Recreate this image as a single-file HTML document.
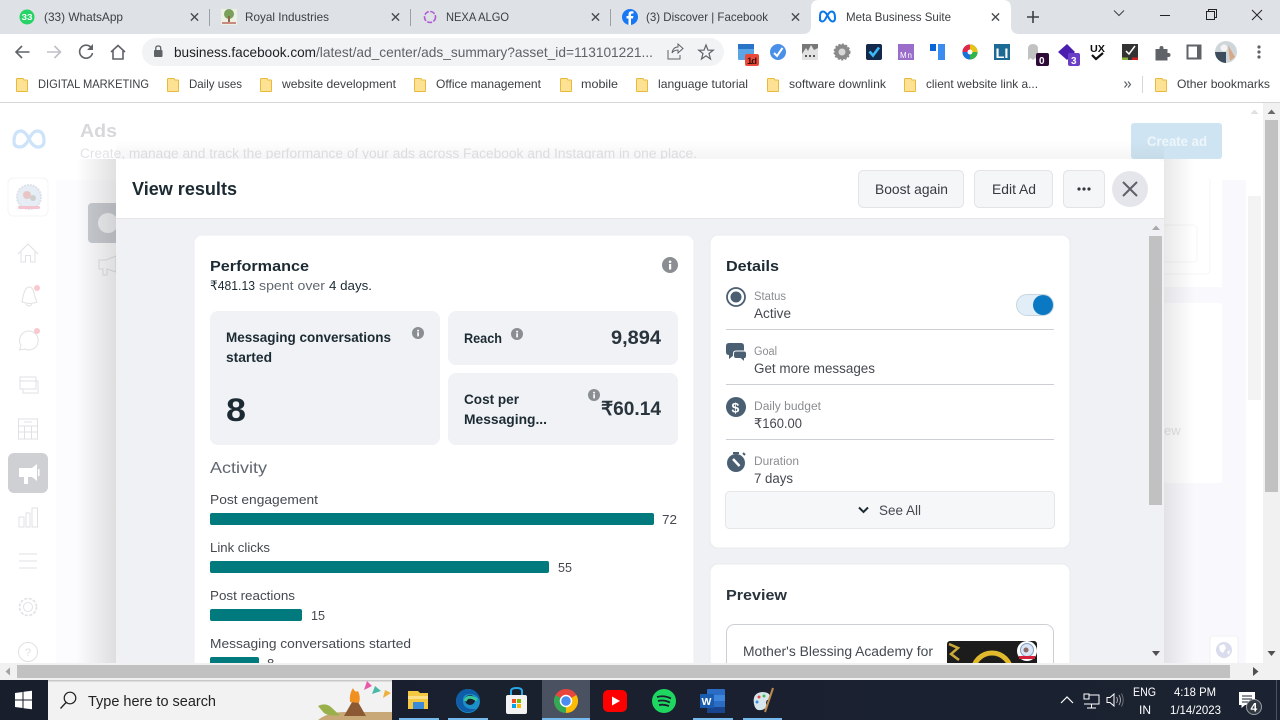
<!DOCTYPE html>
<html><head><meta charset="utf-8"><title>Meta Business Suite</title>
<style>
html,body{margin:0;padding:0;background:#fff;overflow:hidden}
svg{display:block;font-family:"Liberation Sans",Arial,sans-serif}
.b{font-weight:700}
</style></head><body>
<svg width="1280" height="720" viewBox="0 0 1280 720" xmlns="http://www.w3.org/2000/svg">
<defs>
<linearGradient id="sl" x1="0" x2="1" y1="0" y2="0"><stop offset="0" stop-color="#000" stop-opacity="0"/><stop offset="1" stop-color="#000" stop-opacity=".12"/></linearGradient>
<linearGradient id="sr" x1="0" x2="1" y1="0" y2="0"><stop offset="0" stop-color="#000" stop-opacity=".09"/><stop offset="1" stop-color="#000" stop-opacity="0"/></linearGradient>
<linearGradient id="st" x1="0" x2="0" y1="0" y2="1"><stop offset="0" stop-color="#000" stop-opacity="0"/><stop offset="1" stop-color="#000" stop-opacity=".04"/></linearGradient>
<linearGradient id="tb" x1="0" x2="1" y1="0" y2="0"><stop offset="0" stop-color="#181e2c"/><stop offset="1" stop-color="#1b2231"/></linearGradient>
<symbol id="fold" viewBox="0 0 12 14"><path d="M.5 1.2Q.5.5 1.2.5H7L8 2H11Q11.500 2 11.500 2.600V13Q11.500 13.500 11 13.500H1Q.5 13.500 .5 13Z" fill="#fde293" stroke="#e8b93f"/></symbol>
<symbol id="inf" viewBox="0 0 16 16"><circle cx="8" cy="8" r="8" fill="#8a8d91"/><rect x="7" y="7" width="2.200" height="5.500" fill="#fff"/><circle cx="8.100" cy="4.800" r="1.300" fill="#fff"/></symbol>
<symbol id="x" viewBox="0 0 10 10"><path d="M1 1L9 9M9 1L1 9" stroke="#45494d" stroke-width="1.500" fill="none"/></symbol>
</defs>

<!-- tab strip -->
<rect width="1280" height="34" fill="#dee1e6"/>
<path d="M803 34Q811 34 811 26V8Q811 0 819 0H1003Q1011 0 1011 8V26Q1011 34 1019 34Z" fill="#fff"/>
<g fill="#9aa0a6"><rect x="209" y="9" width="1" height="17"/><rect x="410" y="9" width="1" height="17"/><rect x="610" y="9" width="1" height="17"/></g>
<circle cx="27" cy="17" r="7.500" fill="#25d366"/><text x="21.500" y="20" font-size="8" fill="#fff" class="b" textLength="11" lengthAdjust="spacingAndGlyphs">33</text>
<rect x="221" y="9" width="16" height="16" fill="#eef0e4"/><circle cx="229" cy="14" r="5" fill="#7ba05b"/><rect x="228" y="16" width="2" height="6" fill="#8a6a4a"/><rect x="222" y="22" width="14" height="2" fill="#c98a80"/>
<circle cx="430" cy="17" r="5.500" fill="none" stroke="#b05ad0" stroke-width="1.600" stroke-dasharray="5 1.500"/>
<circle cx="630" cy="17" r="8" fill="#1877f2"/><path d="M631 25V18.500H633L633.400 16H631V14.700Q631 13.500 632.200 13.500H633.500V11.400Q632.600 11.200 631.600 11.200Q628.500 11.200 628.500 14.300V16H626.500V18.500H628.500V25Z" fill="#fff"/>
<path d="M820 21V16Q820 11.500 823 11.500Q825.500 11.500 828 16.500Q830.500 21.500 832.500 21.500Q835 21.500 835 18Q835 11.500 831.500 11.500Q829.500 11.500 827 16Q824.500 21.500 822.500 21.500Q820 21.500 820 18" fill="none" stroke="#0a78e8" stroke-width="2"/>
<g font-size="12" fill="#3c4043">
<text x="44" y="21" textLength="79" lengthAdjust="spacingAndGlyphs">(33) WhatsApp</text>
<text x="245" y="21" textLength="84" lengthAdjust="spacingAndGlyphs">Royal Industries</text>
<text x="446" y="21" textLength="63" lengthAdjust="spacingAndGlyphs">NEXA ALGO</text>
<text x="646" y="21" textLength="122" lengthAdjust="spacingAndGlyphs">(3) Discover | Facebook</text>
<text x="846" y="21" textLength="105" lengthAdjust="spacingAndGlyphs">Meta Business Suite</text>
</g>
<use href="#x" x="190" y="12.500" width="9" height="9"/><use href="#x" x="391" y="12.500" width="9" height="9"/><use href="#x" x="591" y="12.500" width="9" height="9"/><use href="#x" x="791" y="12.500" width="9" height="9"/><use href="#x" x="991" y="12.500" width="9" height="9"/>
<path d="M1033 11V23M1027 17H1039" stroke="#3c4043" stroke-width="1.600" fill="none"/>
<path d="M1114 10.500L1119 15.500L1124 10.500" stroke="#3c4043" fill="none"/>
<path d="M1160 15.500H1170" stroke="#222" fill="none"/>
<path d="M1206.500 11.500H1214.500V19.500H1206.500ZM1208.500 11.500V9.500H1216.500V17.500H1214.500" stroke="#222" fill="none"/>
<path d="M1252 10L1262 20M1262 10L1252 20" stroke="#222" fill="none"/>

<!-- toolbar -->
<rect y="34" width="1280" height="68" fill="#fff"/>
<path d="M29.500 52H16M22 46L16 52L22 58" stroke="#5f6368" stroke-width="1.600" fill="none"/>
<path d="M47 52H60.500M54.500 46L60.500 52L54.500 58" stroke="#bdc1c6" stroke-width="1.600" fill="none"/>
<path d="M91.500 48A6.500 6.500 0 1 0 92.500 53" stroke="#5f6368" stroke-width="1.600" fill="none"/><path d="M93 44V50H87Z" fill="#5f6368"/>
<path d="M111 52L118 45.500L125 52M113 50.500V59H123V50.500" stroke="#5f6368" stroke-width="1.600" fill="none"/>
<rect x="142" y="38" width="582" height="28" rx="14" fill="#f1f3f4"/>
<rect x="154" y="50" width="8.500" height="7" rx="1" fill="#5f6368"/><path d="M155.800 50V48Q155.800 46 158.250 46Q160.700 46 160.700 48V50" stroke="#5f6368" stroke-width="1.300" fill="none"/>
<text x="174" y="57" font-size="14" fill="#202124" textLength="142" lengthAdjust="spacingAndGlyphs">business.facebook.com</text>
<text x="316" y="57" font-size="14" fill="#5f6368" textLength="337" lengthAdjust="spacingAndGlyphs">/latest/ad_center/ads_summary?asset_id=113101221...</text>
<path d="M668 50V59H680V55M672 53Q673 47 678 47V44L683 48.500L678 53V50Q674 50 672 53Z" stroke="#5f6368" stroke-width="1" fill="none"/>
<path d="M706 45L708 50.200H713.200L709 53.500L710.500 59L706 55.800L701.500 59L703 53.500L698.800 50.200H704Z" stroke="#5f6368" stroke-width="1.200" fill="none"/>

<!-- extensions -->
<rect x="738" y="44" width="16" height="16" rx="1" fill="#5ba4e6"/><rect x="738" y="44" width="16" height="5" fill="#2a74c8"/>
<rect x="745" y="54" width="14" height="12" rx="2" fill="#ea4a3a"/><text x="747" y="64" font-size="9.500" class="b" fill="#3a0f0a" textLength="10">1d</text>
<circle cx="778" cy="52" r="8" fill="#4a90e8"/><path d="M774 53L777 56L782.500 48" stroke="#fff" stroke-width="2" fill="none"/>
<rect x="802" y="44" width="16" height="16" fill="#777"/><path d="M802 54L806 48L808 51L811 45L814 50L818 48V60H802Z" fill="#e2e2e2"/><g fill="#555"><rect x="805" y="55" width="2" height="2"/><rect x="809" y="55" width="2" height="2"/><rect x="813" y="55" width="2" height="2"/></g>
<circle cx="842" cy="52" r="7.500" fill="#8a8a8a" stroke="#8a8a8a" stroke-dasharray="2 1.500" stroke-width="2"/><circle cx="842" cy="52" r="3.500" fill="#d8d8d8"/>
<rect x="866" y="44" width="16" height="16" rx="2" fill="#13294b"/><path d="M869.500 51.500L873 55.500L879 47.500" stroke="#3db8f5" stroke-width="2.600" fill="none"/>
<rect x="898" y="44" width="16" height="16" fill="#9b6dca"/><text x="900" y="58" font-size="8" fill="#fff" textLength="12">Mn</text>
<rect x="930" y="44" width="6" height="7" fill="#0a66d8"/><rect x="938" y="44" width="7" height="16" fill="#3a8cf0"/>
<circle cx="970" cy="52" r="7.500" fill="#222"/><path d="M970 52V44.500A7.500 7.500 0 0 1 977.500 52Z" fill="#e6c415"/><path d="M970 52H977.500A7.500 7.500 0 0 1 970 59.500Z" fill="#2fb54a"/><path d="M970 52V59.500A7.500 7.500 0 0 1 962.500 52Z" fill="#1a73d8"/><path d="M970 52H962.500A7.500 7.500 0 0 1 970 44.500Z" fill="#e0284a"/><circle cx="970" cy="52" r="2.500" fill="#fff"/>
<rect x="994" y="44" width="16" height="16" fill="#1d6a94"/><text x="995.500" y="58" font-size="14" fill="#fff" class="b" textLength="13" lengthAdjust="spacingAndGlyphs">LI</text>
<path d="M1028 60V49Q1028 44 1033 44Q1038 44 1038 49V60L1035.500 58L1033 60L1030.500 58Z" fill="#c2c2c2"/>
<rect x="1036" y="53" width="13" height="13" rx="2" fill="#2d0a38"/><text x="1039" y="64" font-size="10" class="b" fill="#fff">0</text>
<path d="M1058 52L1067 44L1075 52L1067 60Z" fill="#4a1fb0"/>
<rect x="1068" y="53" width="12" height="13" rx="2" fill="#6a3fc8"/><text x="1071" y="64" font-size="10" class="b" fill="#fff">3</text>
<text x="1090" y="52" font-size="10.500" class="b" fill="#111" textLength="15" lengthAdjust="spacingAndGlyphs">UX</text><path d="M1092 55L1096 59L1103 53" stroke="#111" stroke-width="2.200" fill="none"/>
<rect x="1122" y="44" width="16" height="16" fill="#333"/><rect x="1122" y="57.500" width="6" height="2.500" fill="#8ab53a"/><rect x="1132" y="57.500" width="6" height="2.500" fill="#c22"/><path d="M1126 51L1129 54L1135 46" stroke="#fff" stroke-width="1.500" fill="none"/>
<path d="M1155.500 49H1159.500V48A2 2 0 0 1 1163.500 48V49H1167.500V53H1168.500A2 2 0 0 1 1168.500 57H1167.500V60.500H1155.500Z" fill="#5f6368"/>
<rect x="1187.500" y="45.500" width="13" height="13" fill="none" stroke="#5f6368" stroke-width="2"/><rect x="1197" y="45" width="4" height="14" fill="#5f6368"/>
<circle cx="1226" cy="52" r="11" fill="#cfd6da"/><path d="M1215 52H1226V63A11 11 0 0 1 1215 52Z" fill="#3d4c5c"/><circle cx="1224" cy="48" r="3.500" fill="#f4f4f4"/><path d="M1228 45L1235 57L1230 61Z" fill="#d8a887"/>
<g fill="#5f6368"><circle cx="1259" cy="47" r="1.600"/><circle cx="1259" cy="52" r="1.600"/><circle cx="1259" cy="57" r="1.600"/></g>

<!-- bookmarks -->
<g>
<use href="#fold" x="16" y="78" width="12" height="14"/><use href="#fold" x="167" y="78" width="12" height="14"/><use href="#fold" x="260" y="78" width="12" height="14"/><use href="#fold" x="414" y="78" width="12" height="14"/><use href="#fold" x="560" y="78" width="12" height="14"/><use href="#fold" x="636" y="78" width="12" height="14"/><use href="#fold" x="767" y="78" width="12" height="14"/><use href="#fold" x="904" y="78" width="12" height="14"/><use href="#fold" x="1155" y="78" width="12" height="14"/>
</g>
<g font-size="12" fill="#3c4043">
<text x="38" y="88" textLength="111" lengthAdjust="spacingAndGlyphs">DIGITAL MARKETING</text>
<text x="189" y="88" textLength="53" lengthAdjust="spacingAndGlyphs">Daily uses</text>
<text x="282" y="88" textLength="114" lengthAdjust="spacingAndGlyphs">website development</text>
<text x="436" y="88" textLength="105" lengthAdjust="spacingAndGlyphs">Office management</text>
<text x="581" y="88" textLength="37" lengthAdjust="spacingAndGlyphs">mobile</text>
<text x="658" y="88" textLength="90" lengthAdjust="spacingAndGlyphs">language tutorial</text>
<text x="789" y="88" textLength="97" lengthAdjust="spacingAndGlyphs">software downlink</text>
<text x="926" y="88" textLength="112" lengthAdjust="spacingAndGlyphs">client website link a...</text>
<text x="1177" y="88" textLength="93" lengthAdjust="spacingAndGlyphs">Other bookmarks</text>
</g>
<path d="M1124.500 81.500L1127 84.500L1124.500 87.500M1128 81.500L1130.500 84.500L1128 87.500" stroke="#5f6368" stroke-width="1.200" fill="none"/>
<rect x="1142" y="76" width="1" height="17" fill="#d5d7db"/>
<rect y="102" width="1280" height="1" fill="#d6d6d6"/>

<!-- faded page -->
<rect y="103" width="1263" height="561" fill="#fff"/>
<rect x="56" y="180" width="1190" height="484" fill="#fcfcfe"/>
<rect x="1164" y="180" width="82" height="484" fill="#f9f9fd"/>
<path d="M14 142Q14 131 21 131Q25 131 29 139Q33 147 38 147Q44 147 44 141Q44 131 37 131Q33 131 29 139Q25 147 20 147Q14 147 14 142Z" fill="none" stroke="#cde3f9" stroke-width="3.200"/>
<text x="80" y="137" font-size="18" class="b" fill="#d6d8dc" textLength="37" lengthAdjust="spacingAndGlyphs">Ads</text>
<text x="80" y="158" font-size="13.500" fill="#e2e3e6" textLength="617" lengthAdjust="spacingAndGlyphs">Create, manage and track the performance of your ads across Facebook and Instagram in one place.</text>
<!-- sidebar -->
<rect x="8" y="178" width="40" height="38" rx="5" fill="#fff" stroke="#f4f4f6"/>
<circle cx="29" cy="197" r="12" fill="#e6edf4" stroke="#dde2ea" stroke-dasharray="2 1" stroke-width="2"/><circle cx="27" cy="195" r="4" fill="#e8c6c6"/><circle cx="33" cy="198" r="3" fill="#cfcfcf"/><rect x="18" y="206" width="22" height="3" rx="1.500" fill="#f3c5cf"/>
<g fill="none" stroke="#e0e1e4" stroke-width="1">
<path d="M18 254L28 244L38 254M21 252V262H25.500V255.500H30.500V262H35V252"/>
<path d="M22 302Q23 296 24 293Q26 287 29 287Q33 287 34 293Q35 298 37 302Q30 305 22 302ZM26 304Q29 308 32 304"/>
<path d="M28 331A9.500 9.500 0 1 1 24.500 349L19.500 350L21 345.500A9.500 9.500 0 0 1 28 331Z"/>
<path d="M20 377H36V389H20ZM20 381H36M36 381H38V393H23V389"/>
<path d="M18.500 419H37.500V439H18.500ZM18.500 426H37.500M18.500 432H37.500M24.500 426V439M31.500 426V439M24 422H32"/>
<path d="M19 517H24V527H19ZM26 513H30V527H26ZM32 508H37.500V527H32Z"/>
<path d="M19 554H37M19 561H37M19 568H37"/>
<circle cx="28" cy="607" r="4.500"/><circle cx="28" cy="607" r="8.500" stroke-dasharray="3 1.500" stroke-width="1.600"/>
<circle cx="28" cy="652" r="9.500"/>
</g>
<text x="25" y="656" font-size="11" fill="#e0e1e4">?</text>
<circle cx="37" cy="288" r="3" fill="#f9c9cd"/><circle cx="37" cy="331" r="3" fill="#f9c9cd"/>
<rect x="8" y="453" width="40" height="40" rx="6" fill="#ced0d4"/>
<path d="M19 468H32L37 464V481L32 477H19ZM24 477H28V484H24Z" fill="#fff"/><rect x="38" y="469" width="1.500" height="7" fill="#fff"/>
<rect x="88" y="203" width="40" height="40" rx="4" fill="#c9ccd1"/><circle cx="108" cy="223" r="10" fill="#eff0f2"/>
<path d="M99 260H106L116 256V272L107 269V275H103V269H99Z" fill="none" stroke="#e0e1e4"/>
<!-- faded right -->
<rect x="1164" y="170" width="58" height="117" fill="#fff"/>
<rect x="1140" y="160" width="70" height="114" rx="4" fill="none" stroke="#f5f5f7"/>
<rect x="1140" y="225" width="57" height="37" rx="4" fill="none" stroke="#f5f5f7"/>
<rect x="1164" y="103" width="82" height="76" fill="#fff"/>
<rect x="1131" y="123" width="91" height="36" rx="3" fill="#cfe4f2"/>
<text x="1147" y="146" font-size="14" fill="#eef6fb" class="b" textLength="60" lengthAdjust="spacingAndGlyphs">Create ad</text>
<rect x="1164" y="303" width="58" height="180" rx="3" fill="#fff"/>
<text x="1164" y="435" font-size="13" fill="#e3e3e6">ew</text>
<rect x="1210" y="636" width="28" height="30" rx="3" fill="#fff" stroke="#f1f1f4"/>
<circle cx="1224" cy="650" r="8" fill="#d8dcec"/><path d="M1219 646L1224 644L1226 648L1223 653L1220 651ZM1227 652L1230 650L1229 655Z" fill="#fff"/>
<!-- page scrollbars -->
<rect x="1246" y="103" width="17" height="561" fill="#fff"/>
<rect x="1248" y="196" width="13" height="204" fill="#f3f3f3"/>
<path d="M1250.500 114L1254.500 109.500L1258.500 114Z" fill="#e0e0e0"/>
<rect x="1263" y="103" width="17" height="577" fill="#f1f1f1"/>
<rect x="1265" y="120" width="13" height="372" fill="#c1c1c1"/>
<path d="M1267.500 114L1271.500 109.500L1275.500 114Z" fill="#6a6a6a"/>
<path d="M1267.500 651L1271.500 656L1275.500 651Z" fill="#505050"/>

<!-- modal shadow -->
<rect x="76" y="159" width="40" height="505" fill="url(#sl)"/>
<rect x="1164" y="159" width="30" height="505" fill="url(#sr)"/>
<rect x="116" y="140" width="1048" height="19" fill="url(#st)"/>

<!-- modal -->
<path d="M116 664V167Q116 159 124 159H1156Q1164 159 1164 167V664Z" fill="#eff1f5"/>
<path d="M116 218V167Q116 159 124 159H1156Q1164 159 1164 167V218Z" fill="#fff"/>
<rect x="116" y="218" width="1048" height="1" fill="#e3e5e9"/>
<text x="132" y="195" font-size="18" class="b" fill="#1c2b33" textLength="105" lengthAdjust="spacingAndGlyphs">View results</text>
<rect x="858.500" y="170.500" width="105" height="37" rx="5" fill="#f5f6f8" stroke="#e2e4e8"/>
<text x="875" y="194" font-size="14" fill="#353a40" textLength="73" lengthAdjust="spacingAndGlyphs">Boost again</text>
<rect x="974.500" y="170.500" width="78" height="37" rx="5" fill="#f5f6f8" stroke="#e2e4e8"/>
<text x="992" y="194" font-size="14" fill="#353a40" textLength="44" lengthAdjust="spacingAndGlyphs">Edit Ad</text>
<rect x="1063.500" y="170.500" width="41" height="37" rx="5" fill="#f5f6f8" stroke="#e2e4e8"/>
<g fill="#353a40"><circle cx="1079" cy="189" r="1.600"/><circle cx="1084" cy="189" r="1.600"/><circle cx="1089" cy="189" r="1.600"/></g>
<circle cx="1130" cy="189" r="18" fill="#e4e6eb"/><path d="M1123 182L1137 196M1137 182L1123 196" stroke="#5d6168" stroke-width="2" fill="none"/>
<!-- modal scrollbar -->
<path d="M1152 230L1156 225.500L1160 230Z" fill="#a8a8a8"/>
<rect x="1149" y="236" width="13" height="269" fill="#c1c1c1"/>
<path d="M1152 651L1156 656L1160 651Z" fill="#505050"/>

<!-- performance card -->
<rect x="194" y="235" width="500" height="460" rx="8" fill="#fff" stroke="#eceef1"/>
<text x="210" y="271" font-size="15" class="b" fill="#1c2b33" textLength="99" lengthAdjust="spacingAndGlyphs">Performance</text>
<text x="210" y="290" font-size="13" fill="#1c2b33" textLength="45" lengthAdjust="spacingAndGlyphs">₹481.13</text>
<text x="259" y="290" font-size="13" fill="#606770" textLength="66" lengthAdjust="spacingAndGlyphs">spent over</text>
<text x="329" y="290" font-size="13" fill="#1c2b33" textLength="43" lengthAdjust="spacingAndGlyphs">4 days.</text>
<use href="#inf" x="662" y="257" width="16" height="16"/>
<rect x="210" y="311" width="230" height="134" rx="8" fill="#f0f2f5"/>
<rect x="448" y="311" width="230" height="54" rx="8" fill="#f0f2f5"/>
<rect x="448" y="373" width="230" height="72" rx="8" fill="#f0f2f5"/>
<g font-size="14" class="b" fill="#1c2b33">
<text x="226" y="342" textLength="165" lengthAdjust="spacingAndGlyphs">Messaging conversations</text>
<text x="226" y="362" textLength="46" lengthAdjust="spacingAndGlyphs">started</text>
<text x="464" y="343" textLength="38" lengthAdjust="spacingAndGlyphs">Reach</text>
<text x="464" y="404" textLength="55" lengthAdjust="spacingAndGlyphs">Cost per</text>
<text x="464" y="424" textLength="83" lengthAdjust="spacingAndGlyphs">Messaging...</text>
</g>
<use href="#inf" x="412" y="327" width="12" height="12"/>
<use href="#inf" x="511" y="328" width="12" height="12"/>
<use href="#inf" x="588" y="389" width="12" height="12"/>
<text x="226" y="421" font-size="32" class="b" fill="#1c2b33" textLength="20" lengthAdjust="spacingAndGlyphs">8</text>
<text x="611" y="344" font-size="19" class="b" fill="#29343d" textLength="50" lengthAdjust="spacingAndGlyphs">9,894</text>
<text x="601" y="415" font-size="19" class="b" fill="#29343d" textLength="60" lengthAdjust="spacingAndGlyphs">₹60.14</text>
<text x="210" y="473" font-size="16" fill="#606770" textLength="57" lengthAdjust="spacingAndGlyphs">Activity</text>
<g font-size="13" fill="#444950">
<text x="210" y="504" textLength="108" lengthAdjust="spacingAndGlyphs">Post engagement</text>
<text x="210" y="552" textLength="60" lengthAdjust="spacingAndGlyphs">Link clicks</text>
<text x="210" y="600" textLength="85" lengthAdjust="spacingAndGlyphs">Post reactions</text>
<text x="210" y="648" textLength="201" lengthAdjust="spacingAndGlyphs">Messaging conversations started</text>
<text x="662" y="524" textLength="15" lengthAdjust="spacingAndGlyphs">72</text>
<text x="558" y="572" textLength="14" lengthAdjust="spacingAndGlyphs">55</text>
<text x="311" y="620" textLength="14" lengthAdjust="spacingAndGlyphs">15</text>
<text x="267" y="668">8</text>
</g>
<g fill="#007a7c">
<rect x="210" y="513" width="444" height="12" rx="2"/>
<rect x="210" y="561" width="339" height="12" rx="2"/>
<rect x="210" y="609" width="92" height="12" rx="2"/>
<rect x="210" y="657" width="49" height="12" rx="2"/>
</g>

<!-- details card -->
<rect x="710" y="235" width="360" height="313" rx="8" fill="#fff" stroke="#e9ebef"/>
<text x="726" y="271" font-size="15" class="b" fill="#1c2b33" textLength="53" lengthAdjust="spacingAndGlyphs">Details</text>
<circle cx="736" cy="297" r="9" fill="none" stroke="#4b5f73" stroke-width="1.800"/><circle cx="736" cy="297" r="5.500" fill="#4b5f73"/>
<g font-size="11.500" fill="#8a8d91">
<text x="754" y="300" textLength="32" lengthAdjust="spacingAndGlyphs">Status</text>
<text x="754" y="355" textLength="23" lengthAdjust="spacingAndGlyphs">Goal</text>
<text x="754" y="410" textLength="67" lengthAdjust="spacingAndGlyphs">Daily budget</text>
<text x="754" y="465" textLength="45" lengthAdjust="spacingAndGlyphs">Duration</text>
</g>
<g font-size="13.500" fill="#444950">
<text x="754" y="318" textLength="37" lengthAdjust="spacingAndGlyphs">Active</text>
<text x="754" y="373" textLength="121" lengthAdjust="spacingAndGlyphs">Get more messages</text>
<text x="754" y="428" textLength="48" lengthAdjust="spacingAndGlyphs">₹160.00</text>
<text x="754" y="483" textLength="39" lengthAdjust="spacingAndGlyphs">7 days</text>
</g>
<rect x="1016.500" y="294.500" width="37" height="21" rx="10.500" fill="#e1edf7" stroke="#c9d6e0"/>
<circle cx="1043" cy="305" r="10" fill="#0a78c2"/>
<g fill="#ccd0d5"><rect x="726" y="329" width="328" height="1"/><rect x="726" y="384" width="328" height="1"/><rect x="726" y="439" width="328" height="1"/></g>
<path d="M729 343H741Q744 343 744 346V352Q744 355 741 355H734L729 359V355Q726 355 726 352V346Q726 343 729 343Z" fill="#4b5f73"/>
<path d="M736 351H744Q746.500 351 746.500 353.500V356Q746.500 358.500 744.500 358.500V362L740.500 358.500H736Q733.500 358.500 733.500 356V353.500Q733.500 351 736 351Z" fill="#4b5f73" stroke="#fff"/>
<circle cx="736" cy="407" r="10" fill="#4b5f73"/>
<text x="731.500" y="412.500" font-size="14" class="b" fill="#fff">$</text>
<circle cx="736" cy="463" r="9" fill="#4b5f73"/>
<rect x="733" y="452" width="6" height="2" fill="#4b5f73"/><path d="M743 453L745 455" stroke="#4b5f73" stroke-width="2"/>
<path d="M733 459L739.500 466" stroke="#fff" stroke-width="2.500"/>
<rect x="725.500" y="491.500" width="329" height="37" rx="4" fill="#f6f7f9" stroke="#e4e6ea"/>
<path d="M859 507.500L863.500 512L868 507.500" stroke="#1c2b33" stroke-width="2" fill="none"/>
<text x="879" y="515" font-size="14" fill="#444950" textLength="42" lengthAdjust="spacingAndGlyphs">See All</text>

<!-- preview card -->
<rect x="710" y="564" width="360" height="140" rx="8" fill="#fff" stroke="#e9ebef"/>
<text x="726" y="600" font-size="15" class="b" fill="#29343d" textLength="61" lengthAdjust="spacingAndGlyphs">Preview</text>
<rect x="726.500" y="624.500" width="327" height="70" rx="8" fill="#fff" stroke="#ccd0d5"/>
<text x="743" y="656" font-size="13.500" fill="#444950" textLength="190" lengthAdjust="spacingAndGlyphs">Mother's Blessing Academy for</text>
<rect x="947" y="641" width="90" height="26" rx="3" fill="#1c1c1c"/>
<circle cx="992" cy="672" r="19" fill="none" stroke="#e0b92d" stroke-width="5"/>
<path d="M949 644L958 648L951 654L959 660" stroke="#c9a93a" stroke-width="2.500" fill="none"/>
<circle cx="1027" cy="651" r="10" fill="#fff"/><circle cx="1027" cy="650" r="6.500" fill="#dbe6f2" stroke="#7fa0c8"/><circle cx="1026" cy="650" r="2.500" fill="#8a6a6a"/><rect x="1019" y="656" width="16" height="3" fill="#d6203a"/>

<!-- horizontal scrollbar -->
<rect y="663" width="1280" height="17" fill="#f1f1f1"/>
<rect x="17" y="665" width="1213" height="13" fill="#c1c1c1"/>
<path d="M10 667.500L5.500 671.500L10 675.500Z" fill="#a3a3a3"/>
<path d="M1253 667L1258.500 671.500L1253 676Z" fill="#505050"/>

<!-- taskbar -->
<rect y="680" width="1280" height="40" fill="url(#tb)"/>
<g fill="#fff"><path d="M15 693L22.500 692V699.500H15Z"/><path d="M23.500 691.800L32 690.800V699.500H23.500Z"/><path d="M15 700.500H22.500V708L15 707Z"/><path d="M23.500 700.500H32V709.200L23.500 708.200Z"/></g>
<rect x="48" y="680" width="344" height="40" fill="#f2f2f2"/>
<rect x="48" y="680" width="344" height="1.500" fill="#c8c8c8"/>
<circle cx="70" cy="698" r="5.800" fill="none" stroke="#222" stroke-width="1.200"/><path d="M66 702.500L60.500 708.500" stroke="#222" stroke-width="1.300"/>
<text x="88" y="706" font-size="14.500" fill="#222" textLength="128" lengthAdjust="spacingAndGlyphs">Type here to search</text>
<path d="M318 720Q328 712 345 712H392V720Z" fill="#c9a878"/>
<path d="M318 706Q326 702 332 708Q336 712 340 715Q330 717 324 713Z" fill="#9ab04a"/>
<path d="M344 716L352 702L355 698L358 702L366 716Z" fill="#8b5a34"/>
<path d="M350 702Q349 694 353 688Q355 693 358 691Q361 697 359 703Z" fill="#f09020"/>
<path d="M364 690L367 681L372 686Z" fill="#e85aa8"/>
<path d="M372 694L375 686L381 691Z" fill="#4ab8a8"/><path d="M383 698L385 690L391 693Z" fill="#f0b040"/>
<rect x="542" y="680" width="48" height="40" fill="#4a5261"/>
<g fill="#76b9ed"><rect x="399" y="718" width="40" height="2"/><rect x="448" y="718" width="40" height="2"/><rect x="542" y="718" width="48" height="2"/><rect x="693" y="718" width="40" height="2"/><rect x="743" y="718" width="39" height="2"/></g>
<!-- taskbar apps -->
<path d="M408 691H418L420 693H428V709H408Z" fill="#f5c842"/><rect x="413" y="702" width="11" height="7" fill="#3a8cd8"/><path d="M408 696H428V699H408Z" fill="#fbe08a"/>
<circle cx="468" cy="701" r="12" fill="#1c8fc8"/><path d="M468 689A12 12 0 0 1 480 702Q478 694 470 694Q462 694 463 702Q464 710 476 709A12 12 0 0 1 456 701A12 12 0 0 1 468 689Z" fill="#0f5da8"/><circle cx="470" cy="700" r="5" fill="#1a2030"/><path d="M465 701Q468 694 477 700" stroke="#38c89a" stroke-width="3" fill="none"/>
<rect x="506" y="695" width="21" height="19" rx="2" fill="#f3f3f3"/><path d="M511 695V691Q511 688 516.500 688Q522 688 522 691V695" stroke="#28a8e8" stroke-width="2" fill="none"/><rect x="512" y="699" width="4" height="4" fill="#f25022"/><rect x="517" y="699" width="4" height="4" fill="#7fba00"/><rect x="512" y="704" width="4" height="4" fill="#00a4ef"/><rect x="517" y="704" width="4" height="4" fill="#ffb900"/>
<circle cx="566" cy="701" r="12" fill="#e8453c"/><path d="M566 701L576.400 695A12 12 0 0 1 566 713Z" fill="#fbbc05"/><path d="M566 701L566 713A12 12 0 0 1 555.600 695Z" fill="#34a853"/><circle cx="566" cy="701" r="5.500" fill="#4a8cf0" stroke="#fff" stroke-width="1.500"/>
<rect x="603" y="690" width="24" height="22" rx="5" fill="#f00"/><path d="M612 696.500L620 701L612 705.500Z" fill="#fff"/>
<circle cx="664" cy="701" r="12" fill="#1ed760"/><path d="M657 697Q664 695 671 698.500M658 701Q664 699.500 670 702.500M659 705Q664 704 669 706" stroke="#1a2030" stroke-width="1.800" fill="none"/>
<rect x="707" y="689" width="18" height="24" rx="1" fill="#2b6cc4"/><rect x="707" y="695" width="18" height="6" fill="#3d86dc"/><rect x="707" y="707" width="18" height="6" fill="#18458e"/><rect x="700" y="694" width="14" height="14" fill="#1a5cb0"/><text x="701.500" y="705" font-size="10.500" class="b" fill="#fff">W</text>
<path d="M754 704Q752 693 762 692Q770 692 770 697Q770 700 767 700Q765 703 767 706Q764 711 758 710Q755 709 754 704Z" fill="#d6e6ec"/><circle cx="759" cy="697" r="1.500" fill="#e84a4a"/><circle cx="764" cy="696" r="1.500" fill="#4ab84a"/><circle cx="757" cy="702" r="1.500" fill="#3a8cd8"/><path d="M773 688L765 712" stroke="#c08a4a" stroke-width="2"/>
<!-- tray -->
<path d="M1061 703L1067 697L1073 703" stroke="#fff" stroke-width="1.200" fill="none"/>
<path d="M1088 695H1099V704H1084M1091.500 704V708M1087 708H1096" stroke="#fff" fill="none"/><rect x="1084" y="694" width="5" height="5" fill="#1a2030" stroke="#fff"/>
<path d="M1107 697.500H1110L1114 694V706L1110 702.500H1107Z" stroke="#fff" fill="none"/><path d="M1116.500 697Q1118.500 700 1116.500 703M1119 695Q1122 700 1119 705" stroke="#a5a8ae" fill="none"/><path d="M1121.500 693.500Q1125 700 1121.500 706.500" stroke="#6b6f78" fill="none"/>
<g font-size="12" fill="#fff">
<text x="1133" y="696" textLength="23" lengthAdjust="spacingAndGlyphs">ENG</text>
<text x="1139" y="714" textLength="12" lengthAdjust="spacingAndGlyphs">IN</text>
<text x="1174" y="696" textLength="42" lengthAdjust="spacingAndGlyphs">4:18 PM</text>
<text x="1170" y="714" textLength="51" lengthAdjust="spacingAndGlyphs">1/14/2023</text>
</g>
<path d="M1239 692H1255V705H1245L1241.500 708V705H1239Z" fill="#fff"/>
<path d="M1242 696H1252M1242 699H1252M1242 702H1249" stroke="#1a2030"/>
<circle cx="1254" cy="707" r="7.500" fill="#333a44" stroke="#9aa0a6"/>
<text x="1250.500" y="711.500" font-size="12" class="b" fill="#fff">4</text>
<rect x="1276" y="680" width="1" height="40" fill="#4a5261"/>
</svg>
</body></html>
